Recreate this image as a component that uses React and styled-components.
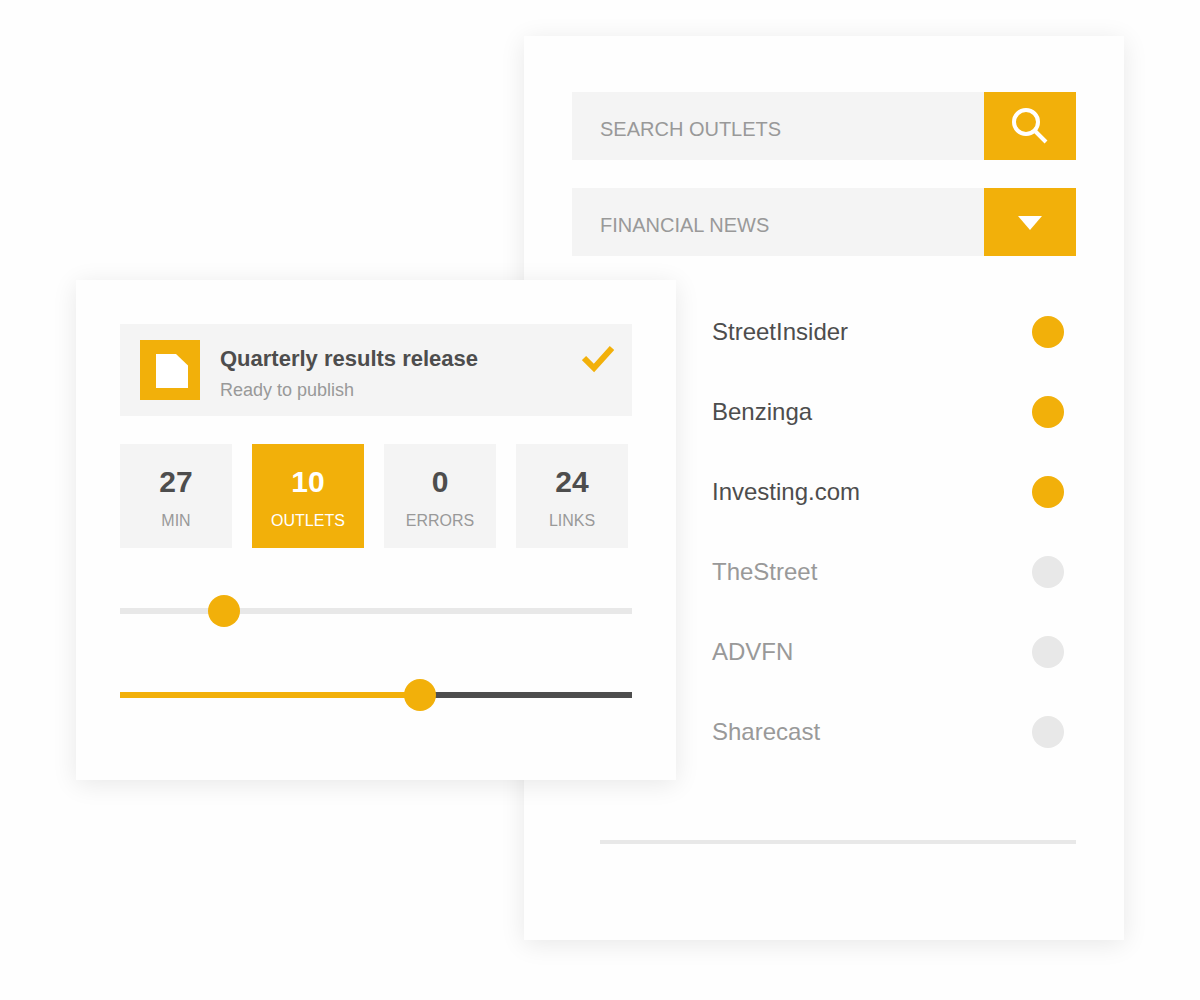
import React, { useState } from 'react'
import styled, { createGlobalStyle } from 'styled-components'

const yellow = '#f2b00a'
const dark = '#4d4d4d'
const muted = '#999'
const field = '#f4f4f4'
const line = '#e8e8e8'

const GlobalStyle = createGlobalStyle`
  *, *::before, *::after {
    box-sizing: border-box;
  }

  body {
    margin: 0;
    background: #fefefe;
    color: ${dark};
    font-family: "Liberation Sans", Arial, sans-serif;
  }

  input, select, button {
    font-family: inherit;
  }
`

const PageStyled = styled.main`
  display: grid;
  grid-template-columns: 448fr 152fr 448fr;
  align-items: start;

  padding: 36px 76px 60px;
`

const PanelStyled = styled.section`
  min-width: 0;

  background: #fefefe;
  box-shadow: 0 4px 24px rgba(0, 0, 0, .09);
`

const OutletsPanelStyled = styled(PanelStyled)`
  grid-column: 2 / 4;
  grid-row: 1;

  padding: 56px 48px 96px;
`

const ReleasePanelStyled = styled(PanelStyled)`
  grid-column: 1 / 3;
  grid-row: 1;
  z-index: 1;

  margin-top: 244px;
  padding: 44px 44px 69px;
`

const FieldStyled = styled.div`
  display: grid;
  grid-template-columns: 1fr 92px;
  grid-template-rows: 68px;

  margin-bottom: 28px;

  background: ${field};
`

const SearchInputStyled = styled.input`
  min-width: 0;
  padding: 6px 28px 0;

  border: 0;
  background: transparent;
  color: ${dark};
  font-size: 20px;

  &::placeholder {
    color: ${muted};
    opacity: 1;
  }
`

const SearchButtonStyled = styled.button`
  display: flex;
  align-items: center;
  justify-content: center;

  padding: 0;

  border: 0;
  background: ${yellow};
  cursor: pointer;
`

const SelectStyled = styled.select`
  grid-column: 1 / 3;
  grid-row: 1;

  appearance: none;
  min-width: 0;
  padding: 6px 120px 0 28px;

  border: 0;
  border-radius: 0;
  background: transparent;
  color: ${muted};
  font-size: 20px;
`

const SelectArrowStyled = styled.span`
  grid-column: 2;
  grid-row: 1;

  display: flex;
  align-items: center;
  justify-content: center;

  background: ${yellow};
  pointer-events: none;
`

const OutletListStyled = styled.ul`
  list-style: none;

  margin: 0 0 68px;
  padding: 8px 12px 0 140px;
`

const OutletStyled = styled.label`
  display: flex;
  align-items: center;
  justify-content: space-between;

  height: 80px;

  color: ${({ $on }) => ($on ? dark : muted)};
  font-size: 24px;
  cursor: pointer;
`

const DotStyled = styled.input`
  appearance: none;
  flex: none;
  width: 32px;
  height: 32px;
  margin: 0;

  border-radius: 50%;
  background: ${line};
  cursor: pointer;

  &:checked {
    background: ${yellow};
  }
`

const DividerStyled = styled.hr`
  height: 4px;
  margin: 0 0 0 28px;

  border: 0;
  background: ${line};
`

const ReleaseStyled = styled.article`
  display: flex;
  align-items: flex-start;
  gap: 20px;

  margin-bottom: 28px;
  padding: 16px 18px 16px 20px;

  background: ${field};
`

const ReleaseIconStyled = styled.svg`
  flex: none;

  background: ${yellow};
`

const ReleaseTextStyled = styled.div`
  display: flex;
  flex: 1;
  flex-direction: column;
  gap: 6px;

  padding-top: 4px;
`

const TitleStyled = styled.h2`
  margin: 0;

  font-size: 22px;
  line-height: 30px;
`

const StatusStyled = styled.p`
  margin: 0;

  color: ${muted};
  font-size: 18px;
  line-height: 20px;
`

const CheckStyled = styled.svg`
  flex: none;
  margin-top: 4px;
`

const StatsStyled = styled.div`
  display: grid;
  grid-template-columns: repeat(4, 1fr);
  gap: 20px;

  padding-right: 4px;
`

const StatStyled = styled.div`
  display: flex;
  flex-direction: column;
  align-items: center;
  gap: 12px;

  padding: 20px 0 18px;

  background: ${({ $active }) => ($active ? yellow : field)};
  color: ${({ $active }) => ($active ? '#fff' : dark)};
`

const StatValueStyled = styled.strong`
  font-size: 30px;
  line-height: 36px;
`

const StatLabelStyled = styled.span`
  color: ${({ $active }) => ($active ? '#fff' : muted)};
  font-size: 16px;
  line-height: 18px;
`

const SlidersStyled = styled.div`
  display: flex;
  flex-direction: column;
  gap: 52px;

  padding-top: 47px;
`

const SliderStyled = styled.input`
  appearance: none;
  display: block;
  width: 100%;
  height: 32px;
  margin: 0;

  background: linear-gradient(
    to right,
    ${({ $fill }) => $fill} var(--progress),
    ${({ $track }) => $track} var(--progress)
  ) center / 100% 6px no-repeat;
  cursor: pointer;

  &::-webkit-slider-thumb {
    appearance: none;
    width: 32px;
    height: 32px;

    border-radius: 50%;
    background: ${yellow};
  }

  &::-moz-range-thumb {
    width: 32px;
    height: 32px;

    border: 0;
    border-radius: 50%;
    background: ${yellow};
  }
`

const SLIDER_MAX = 120

const Slider = ({ label, initial, fill, track }) => {
  const [value, setValue] = useState(initial)

  return (
    <SliderStyled
      type="range"
      aria-label={label}
      min="0"
      max={SLIDER_MAX}
      value={value}
      onChange={e => setValue(Number(e.target.value))}
      $fill={fill}
      $track={track}
      style={{ '--progress': `${(value / SLIDER_MAX) * 100}%` }}
      />
  )
}

const stats = [
  { value: 27, label: 'MIN' },
  { value: 10, label: 'OUTLETS', active: true },
  { value: 0, label: 'ERRORS' },
  { value: 24, label: 'LINKS' },
]

const initialOutlets = [
  { name: 'StreetInsider', on: true },
  { name: 'Benzinga', on: true },
  { name: 'Investing.com', on: true },
  { name: 'TheStreet', on: false },
  { name: 'ADVFN', on: false },
  { name: 'Sharecast', on: false },
]

const OutletsPanel = () => {
  const [outlets, setOutlets] = useState(initialOutlets)

  const toggle = name => setOutlets(outlets.map(o => (o.name === name ? { ...o, on: !o.on } : o)))

  return (
    <OutletsPanelStyled>
      <FieldStyled>
        <SearchInputStyled type="text" placeholder="SEARCH OUTLETS" aria-label="Search outlets" />
        <SearchButtonStyled type="button" aria-label="Search">
          <svg width="36" height="36" fill="none" stroke="#fff" strokeWidth="4">
            <circle cx="14" cy="14" r="12" />
            <path d="M22.5 22.5L34 34" />
          </svg>
        </SearchButtonStyled>
      </FieldStyled>
      <FieldStyled>
        <SelectStyled aria-label="Category">
          <option>FINANCIAL NEWS</option>
        </SelectStyled>
        <SelectArrowStyled>
          <svg width="24" height="16" fill="#fff">
            <path d="M0 2H24L12 16Z" />
          </svg>
        </SelectArrowStyled>
      </FieldStyled>
      <OutletListStyled>
        {outlets.map(({ name, on }) => (
          <li key={name}>
            <OutletStyled $on={on}>
              {name}
              <DotStyled type="checkbox" checked={on} onChange={() => toggle(name)} />
            </OutletStyled>
          </li>
        ))}
      </OutletListStyled>
      <DividerStyled />
    </OutletsPanelStyled>
  )
}

const ReleasePanel = () => (
  <ReleasePanelStyled>
    <ReleaseStyled>
      <ReleaseIconStyled width="60" height="60" fill="#fff">
        <path d="M16 14H36L48 25.5V48H16Z" />
      </ReleaseIconStyled>
      <ReleaseTextStyled>
        <TitleStyled>Quarterly results release</TitleStyled>
        <StatusStyled>Ready to publish</StatusStyled>
      </ReleaseTextStyled>
      <CheckStyled width="32" height="30" fill="none" stroke={yellow} strokeWidth="6">
        <path d="M2 14L12 24L30 4" />
      </CheckStyled>
    </ReleaseStyled>
    <StatsStyled>
      {stats.map(({ value, label, active }) => (
        <StatStyled key={label} $active={active}>
          <StatValueStyled>{value}</StatValueStyled>
          <StatLabelStyled $active={active}>{label}</StatLabelStyled>
        </StatStyled>
      ))}
    </StatsStyled>
    <SlidersStyled>
      <Slider label="Delay" initial={22} fill={line} track={line} />
      <Slider label="Reach" initial={71} fill={yellow} track={dark} />
    </SlidersStyled>
  </ReleasePanelStyled>
)

export default () => (
  <>
    <GlobalStyle />
    <PageStyled>
      <OutletsPanel />
      <ReleasePanel />
    </PageStyled>
  </>
)
